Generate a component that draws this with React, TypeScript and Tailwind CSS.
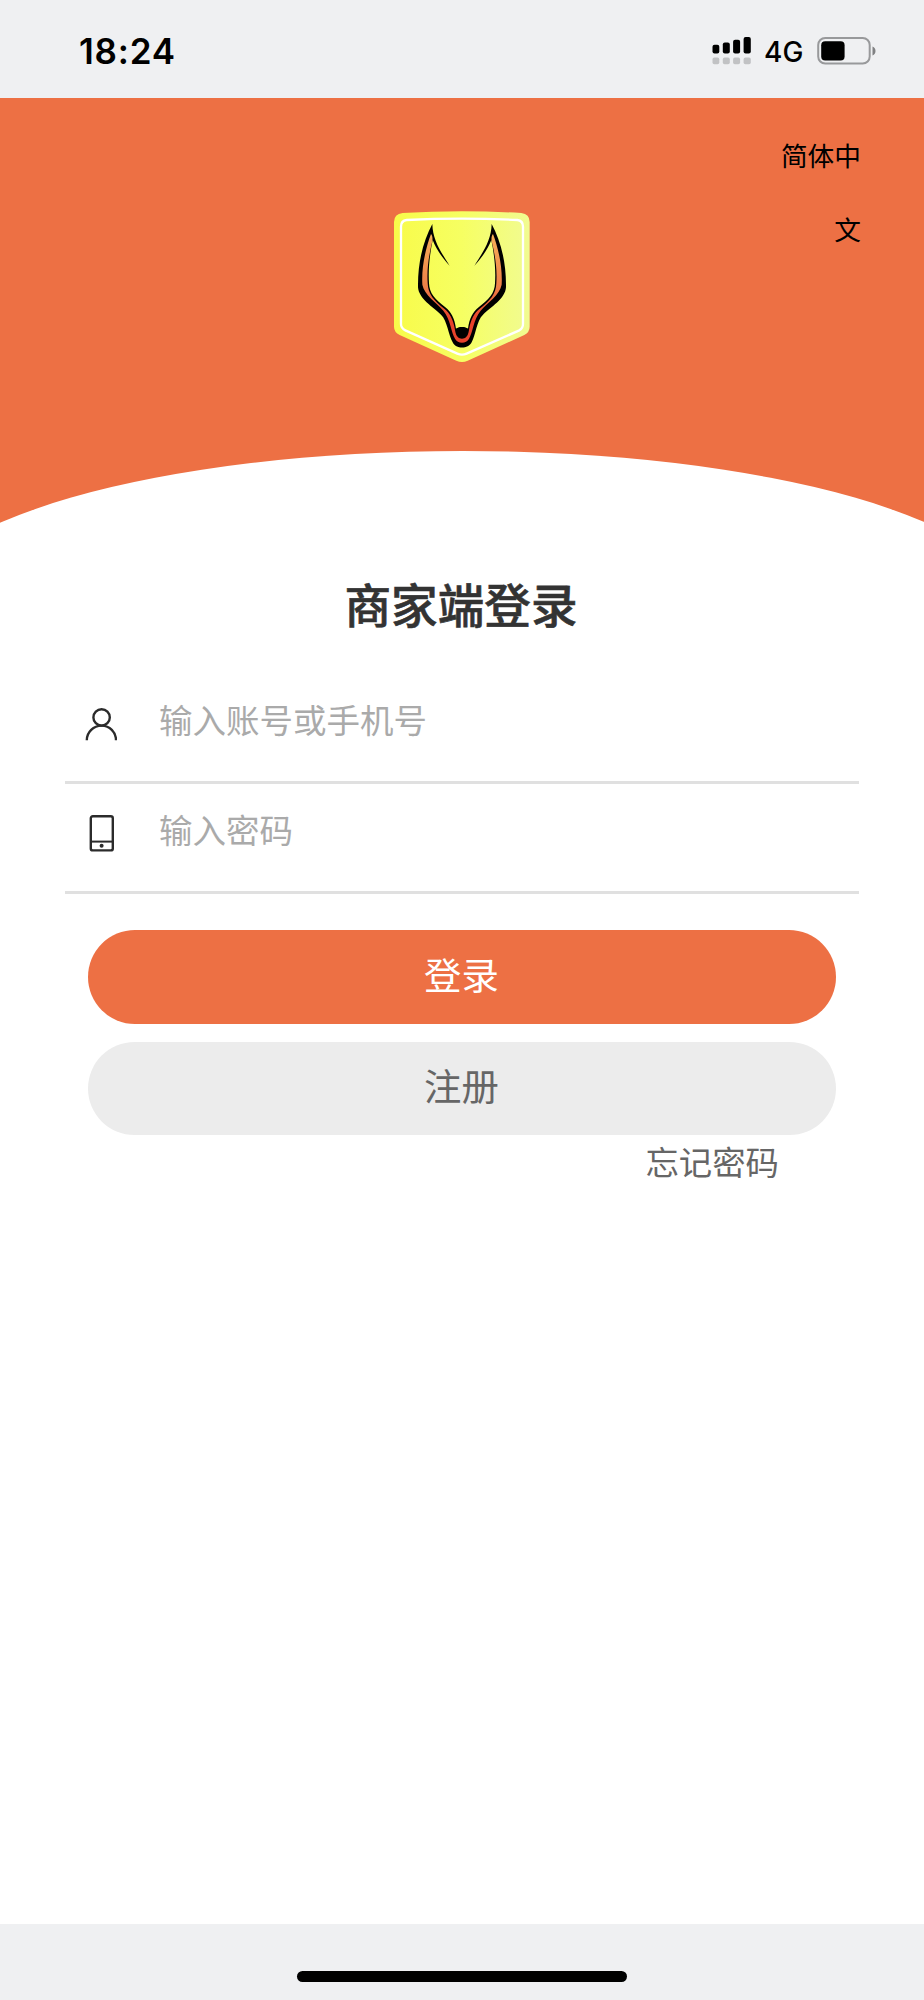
import React from "react";

const StatusBar = () => {
  return (
    <div className="h-[98px] shrink-0 bg-[#eff0f2] flex items-start justify-between pl-[79px] pr-[48px] pt-[20px]">
      <span className="font-['Inter',sans-serif] font-semibold text-[35px] leading-[62px] tracking-[0.8px] text-black">
        18:24
      </span>

      <div className="flex items-center h-[61px]">
        {/* Signal bars */}
        <svg className="w-[39px] h-[28px]" viewBox="0 0 39 28">
          <g fill="#000">
            <rect x="0.5" y="7.8" width="6.8" height="8.6" rx="2" />
            <rect x="10.8" y="5.6" width="7" height="10.8" rx="2" />
            <rect x="21.1" y="2.8" width="7" height="13.6" rx="2" />
            <rect x="31.6" y="0" width="7.2" height="16.4" rx="2" />
          </g>
          <g fill="#c1c2c4">
            <rect x="0.5" y="20.6" width="6.8" height="6.6" rx="1.8" />
            <rect x="10.8" y="20.6" width="7" height="6.6" rx="1.8" />
            <rect x="21.1" y="20.6" width="7" height="6.6" rx="1.8" />
            <rect x="31.6" y="20.6" width="7.2" height="6.6" rx="1.8" />
          </g>
        </svg>
        <span className="ml-[13px] w-[53px] pt-[2px] font-['Inter',sans-serif] font-medium text-[28px] leading-[60px] text-black">
          4G
        </span>
        {/* Battery */}
        <svg className="w-[59px] h-[28px]" viewBox="0 0 59 28">
          <rect x="1.2" y="1" width="51.5" height="25.6" rx="7" fill="none" stroke="#98999b" strokeWidth="2" />
          <rect x="4.2" y="4.2" width="23.4" height="19.4" rx="4" fill="#000" />
          <path d="M55.5 9.4c4 1.3 4 7.7 0 9z" fill="#808183" />
        </svg>
      </div>
    </div>
  );
};

const Logo = () => {
  return (
    <svg className="w-[165px] h-[170px]" viewBox="0 0 495 510">
      <defs>
        <linearGradient id="shield" x1="0" y1="0" x2="1" y2="0">
          <stop offset="0" stopColor="#f8fb4a" />
          <stop offset="0.5" stopColor="#f6ff62" />
          <stop offset="1" stopColor="#f1fb92" />
        </linearGradient>
        <linearGradient id="fur" x1="0" y1="100" x2="0" y2="425" gradientUnits="userSpaceOnUse">
          <stop offset="0" stopColor="#f6b058" />
          <stop offset="0.5" stopColor="#ee8048" />
          <stop offset="0.8" stopColor="#e8412a" />
          <stop offset="1" stopColor="#e8432c" />
        </linearGradient>
      </defs>
      <path
        d="M68 39Q245 29 424 39Q449 42 449 66V380Q449 396 433 405L263 482Q246 490 229 482L59 405Q42 396 42 380V66Q42 42 68 39Z"
        fill="url(#shield)"
      />
      <path
        d="M80 60Q245 52 412 60Q429 62 429 80V372Q429 385 418 391L260 461Q246 467 232 461L76 391Q63 385 63 372V80Q63 62 80 60Z"
        fill="none"
        stroke="#fff"
        strokeWidth="7"
      />
      {/* Fox head */}
      <path
        d="M157 72C132 120 113 180 114 262C116 296 160 322 183 344C202 362 205 405 218 427C227 448 265 448 275 427C287 405 290 362 309 344C332 322 376 296 378 262C379 180 360 120 335 72C334 120 310 155 283 197C305 175 324 145 334 120C342 160 348 205 345 250C344 280 327 298 296 322C279 335 268 355 264 386C255 379 237 379 228 386C224 355 213 335 196 322C165 298 148 280 147 250C144 205 150 160 158 120C168 145 187 175 209 197C182 155 158 120 157 72Z"
        fill="#000"
      />
      <path
        d="M153 102C137 145 124 200 127 254C133 285 170 308 190 332C212 358 213 397 225 416C233 432 259 432 267 416C279 397 280 358 302 332C322 308 359 285 365 254C368 200 355 145 339 102C334 108 334 116 335 124C345 165 352 205 349 250C348 282 331 302 299 326C282 340 272 358 267 390C264 410 256 416 246 416C236 416 228 410 225 390C220 358 210 340 193 326C161 302 144 282 143 250C140 205 147 165 157 124C158 116 158 108 153 102Z"
        fill="url(#fur)"
      />
      <path d="M228 387C236 380 256 380 264 387C264 402 259 413 246 413C233 413 228 402 228 387Z" fill="#000" />
    </svg>
  );
};

const UserIcon = () => {
  return (
    <svg className="w-[32px] h-[33px]" viewBox="0 0 32 33" fill="none" stroke="#2b2b2b" strokeWidth="2.4">
      <circle cx="16.6" cy="9.4" r="8.2" />
      <path d="M1.8 32.2C1.8 24 8.6 17.6 16.6 17.6S31 24 31 32.2" />
    </svg>
  );
};

const PhoneIcon = () => {
  return (
    <svg className="w-[32px] h-[37px]" viewBox="0 0 32 37" fill="none" stroke="#2b2b2b" strokeWidth="2.4">
      <rect x="5.8" y="1.2" width="22" height="34.2" rx="2" />
      <path d="M5.8 26.6H27.8" strokeWidth="2" />
      <circle cx="16.6" cy="30.8" r="2" fill="#2b2b2b" stroke="none" />
    </svg>
  );
};

const App = () => {
  return (
    <div className="w-full h-[2000px] flex flex-col bg-white font-['Noto_Sans_CJK_SC',sans-serif]">
      <StatusBar />

      {/* Header with curved bottom edge */}
      <div className="relative h-[425px] shrink-0 overflow-hidden bg-[#ed7044] flex justify-center pt-[102px]">
        <Logo />
        <div className="absolute right-[63px] top-[20px] w-[90px] text-right text-[26.7px] leading-[74px] text-black">
          简体中文
        </div>
        <div className="absolute top-[352.5px] -left-[91px] w-[1108px] h-[318px] rounded-[50%] bg-white" />
      </div>

      <div className="flex-1 flex flex-col px-[65px]">
        <h1 className="mt-[44px] text-center text-[46.6px] leading-[72px] font-medium text-[#333] [-webkit-text-stroke:0.6px_#333] -translate-x-px">
          商家端登录
        </h1>

        {/* Login form */}
        <div className="mt-[35px] h-[110px] border-b-[3px] border-[#e0e0e0] flex items-start pl-[20px] pt-[34px]">
          <UserIcon />
          <input
            type="text"
            placeholder="输入账号或手机号"
            className="ml-[42px] -mt-[13px] h-[48px] flex-1 min-w-0 text-[33.5px] outline-none placeholder:text-[#aaa]"
          />
        </div>
        <div className="h-[110px] border-b-[3px] border-[#e0e0e0] flex items-start pl-[20px] pt-[31px]">
          <PhoneIcon />
          <input
            type="password"
            placeholder="输入密码"
            className="ml-[42px] -mt-[10px] h-[48px] flex-1 min-w-0 text-[33.5px] outline-none placeholder:text-[#aaa]"
          />
        </div>

        <div className="mt-[36px] px-[23px] flex flex-col gap-[18px]">
          <button className="h-[94px] rounded-full bg-[#ed7044] text-white text-[37.4px] leading-[88px] pb-[6px] pr-[1px]">
            登录
          </button>
          <button className="h-[93px] rounded-full bg-[#ececec] text-[#666] text-[37.4px] leading-[87px] pb-[6px] pr-[1px]">
            注册
          </button>
        </div>
        <a className="self-end mr-[80px] mt-px text-[33.4px] leading-[50px] text-[#666]">忘记密码</a>
      </div>

      {/* Home indicator */}
      <div className="h-[76px] shrink-0 bg-[#eff0f2] flex justify-center pt-[47px]">
        <div className="w-[330px] h-[11px] rounded-full bg-black" />
      </div>
    </div>
  );
};

export default App;
